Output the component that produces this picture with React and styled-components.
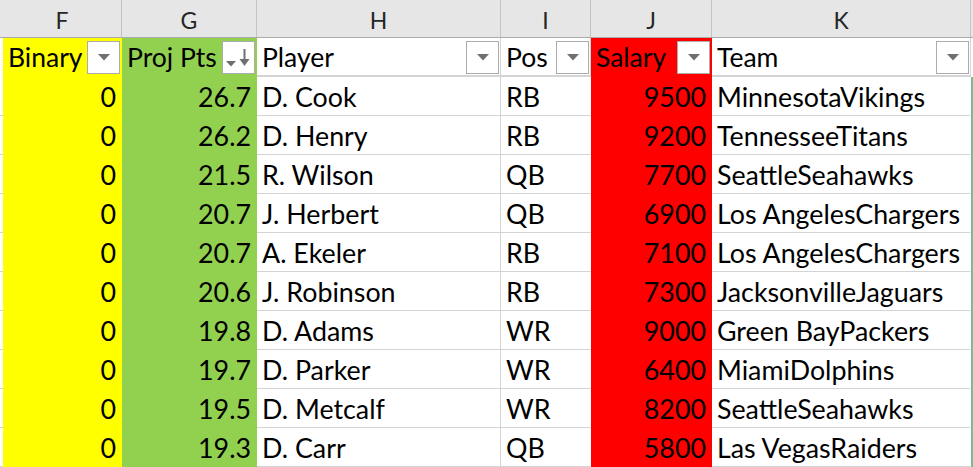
import React from 'react'
import styled, { createGlobalStyle } from 'styled-components'

const GRID = '3px 119px 135px 244px 90px 121px 259px 2px'
const LINE = '#d4d4d4'

const columns = [
    { letter: 'F', title: 'Binary', fill: '#ffff00', align: 'right' },
    { letter: 'G', title: 'Proj Pts', fill: '#92d050', align: 'right', sorted: true },
    { letter: 'H', title: 'Player', align: 'left', line: true },
    { letter: 'I', title: 'Pos', align: 'left' },
    { letter: 'J', title: 'Salary', fill: '#ff0000', align: 'right' },
    { letter: 'K', title: 'Team', align: 'left' },
]

const rows = [
    ['0', '26.7', 'D. Cook', 'RB', '9500', 'MinnesotaVikings'],
    ['0', '26.2', 'D. Henry', 'RB', '9200', 'TennesseeTitans'],
    ['0', '21.5', 'R. Wilson', 'QB', '7700', 'SeattleSeahawks'],
    ['0', '20.7', 'J. Herbert', 'QB', '6900', 'Los AngelesChargers'],
    ['0', '20.7', 'A. Ekeler', 'RB', '7100', 'Los AngelesChargers'],
    ['0', '20.6', 'J. Robinson', 'RB', '7300', 'JacksonvilleJaguars'],
    ['0', '19.8', 'D. Adams', 'WR', '9000', 'Green BayPackers'],
    ['0', '19.7', 'D. Parker', 'WR', '6400', 'MiamiDolphins'],
    ['0', '19.5', 'D. Metcalf', 'WR', '8200', 'SeattleSeahawks'],
    ['0', '19.3', 'D. Carr', 'QB', '5800', 'Las VegasRaiders'],
]

const GlobalStyle = createGlobalStyle`
    html, body {
        margin: 0;
        background: #ffffff;
        overflow: hidden;
    }
    body {
        font-family: Lato, "Open Sans", "Liberation Sans", sans-serif;
        color: #000000;
    }
`

function FilterArrow() {
    return (
        <svg width="12" height="7" viewBox="0 0 12 7">
            <polygon points="0,0 12,0 6,6.5" fill="#6f6f6f" />
        </svg>
    )
}

// sort-descending marker: small filter triangle plus a down arrow
function SortArrow() {
    return (
        <svg width="31" height="31" viewBox="0 0 31 31">
            <polygon points="3,19 13,19 8,24.5" fill="#6f6f6f" />
            <line x1="21.5" y1="7" x2="21.5" y2="22" stroke="#6f6f6f" strokeWidth="2" />
            <polygon points="16.5,17 26.5,17 21.5,24" fill="#6f6f6f" />
        </svg>
    )
}

function App() {
    return (
        <Sheet>
            <GlobalStyle />
            <LetterRow>
                <Spacer />
                {columns.map((c) => (
                    <Letter key={c.letter}>{c.letter}</Letter>
                ))}
                <Spacer />
            </LetterRow>
            <FilterRow>
                <Blank />
                {columns.map((c) => (
                    <FilterCell key={c.letter} $fill={c.fill}>
                        <span>{c.title}</span>
                        <DropButton>{c.sorted ? <SortArrow /> : <FilterArrow />}</DropButton>
                    </FilterCell>
                ))}
                <Blank />
            </FilterRow>
            {rows.map((r, i) => (
                <DataRow key={i}>
                    <Blank $line />
                    {r.map((v, j) => (
                        <Cell
                            key={j}
                            $fill={columns[j].fill}
                            $align={columns[j].align}
                            $line={columns[j].line}
                        >
                            {v}
                        </Cell>
                    ))}
                    <Edge />
                </DataRow>
            ))}
        </Sheet>
    )
}

const Sheet = styled.div`
    width: 973px;
    display: flex;
    flex-direction: column;
`

const LetterRow = styled.div`
    display: grid;
    grid-template-columns: ${GRID};
    height: 38px;
    box-sizing: border-box;
    background: #e6e6e6;
    border-bottom: 1px solid #ababab;
`

const Spacer = styled.div``

const Letter = styled.div`
    display: flex;
    align-items: center;
    justify-content: center;
    box-sizing: border-box;
    border-right: 1px solid #c4c4c4;
    font-size: 23px;
    color: #262626;
    padding-top: 2px;
`

const FilterRow = styled.div`
    display: grid;
    grid-template-columns: ${GRID};
    height: 39px;
`

const Blank = styled.div`
    background: #ffffff;
    box-sizing: border-box;
    border-bottom: 1px solid ${(p) => (p.$line ? LINE : 'transparent')};
`

const FilterCell = styled.div`
    display: flex;
    align-items: center;
    box-sizing: border-box;
    padding: 1px 1px 0 5px;
    background: ${(p) => p.$fill || '#ffffff'};
    border-bottom: 2px solid ${(p) => p.$fill || LINE};
    border-right: 1px solid ${(p) => p.$fill || LINE};
    font-size: 26.5px;
    white-space: nowrap;
    span {
        flex: 1;
        overflow: hidden;
    }
`

const DropButton = styled.div`
    width: 33px;
    height: 33px;
    box-sizing: border-box;
    flex: none;
    background: #ffffff;
    border: 1px solid #ababab;
    display: flex;
    align-items: center;
    justify-content: center;
`

const DataRow = styled.div`
    display: grid;
    grid-template-columns: ${GRID};
    height: 39px;
`

const Cell = styled.div`
    display: flex;
    align-items: center;
    justify-content: ${(p) => (p.$align === 'right' ? 'flex-end' : 'flex-start')};
    box-sizing: border-box;
    padding: 2px 5px 0 5px;
    background: ${(p) => p.$fill || '#ffffff'};
    border-bottom: 1px solid ${(p) => p.$fill || LINE};
    border-right: 1px solid ${(p) => (p.$line ? LINE : 'transparent')};
    font-size: 26.8px;
    white-space: nowrap;
    overflow: hidden;
`

const Edge = styled.div`
    background: #70c28a;
`

export default App
